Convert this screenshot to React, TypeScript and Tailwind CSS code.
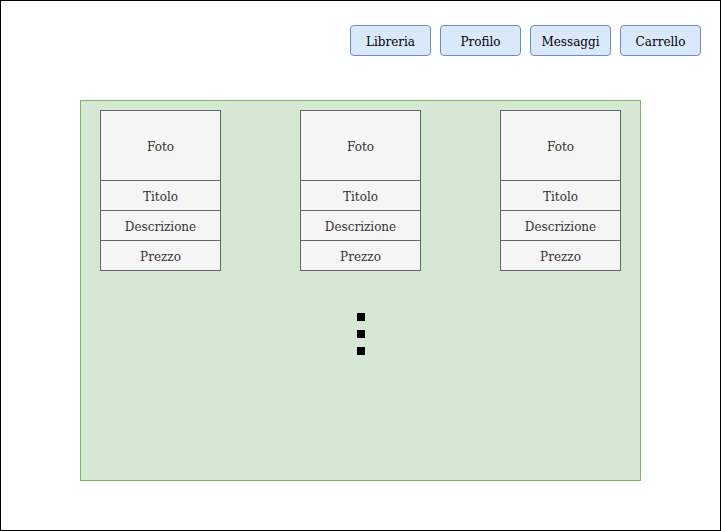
export default function App() {
  const cell = "flex items-center justify-center pt-[2px]";
  const card = (
    <div className="flex w-[121px] flex-col border border-[#666666] bg-[#f5f5f5] text-[12px] text-[#333333]">
      <div className={`${cell} h-[69px]`}>Foto</div>
      <div className={`${cell} h-[30px] border-t border-[#666666]`}>Titolo</div>
      <div className={`${cell} h-[30px] border-t border-[#666666]`}>Descrizione</div>
      <div className={`${cell} h-[30px] border-t border-[#666666]`}>Prezzo</div>
    </div>
  );
  const btns = ["Libreria", "Profilo", "Messaggi", "Carrello"];
  return (
    <div
      className="h-[531px] w-[721px] border border-black bg-white"
      style={{ fontFamily: '"DejaVu Serif", serif' }}
    >
      <div className="flex justify-end gap-[9px] pr-[19px] pt-[24px]">
        {btns.map((b) => (
          <div
            key={b}
            className="flex h-[31px] w-[81px] items-center justify-center rounded-[4px] border border-[#6c8ebf] bg-[#dae8fc] pt-[2px] text-[12px] text-black"
          >
            {b}
          </div>
        ))}
      </div>
      <div className="ml-[79px] mt-[44px] flex h-[381px] w-[561px] flex-col border border-[#82b366] bg-[#d5e8d4] pl-[19px] pt-[9px]">
        <div className="flex gap-[79px]">
          {card}
          {card}
          {card}
        </div>
        <div className="ml-[257px] mt-[42px] flex w-[8px] flex-col gap-[9px]">
          <div className="h-[8px] w-[8px] bg-black" />
          <div className="h-[8px] w-[8px] bg-black" />
          <div className="h-[8px] w-[8px] bg-black" />
        </div>
      </div>
    </div>
  );
}
